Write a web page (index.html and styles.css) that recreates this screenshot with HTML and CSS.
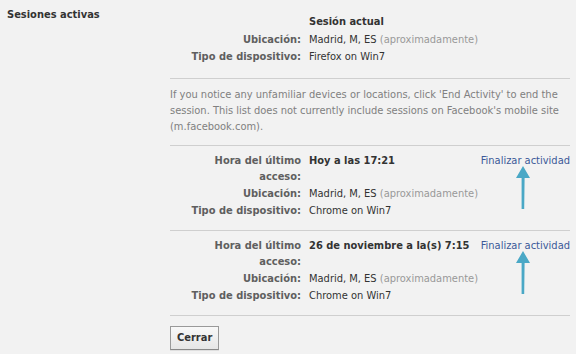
FILE: index.html
```html
<!DOCTYPE html>
<html lang="es">
<head>
<meta charset="utf-8">
<title>Sesiones activas</title>
<link rel="stylesheet" href="styles.css">
</head>
<body>
<div class="page">
  <div class="side">Sesiones activas</div>
  <div class="main">
    <div class="block current">
      <div class="grid">
        <div class="label"></div>
        <div class="value strong">Sesión actual</div>
        <div class="label">Ubicación:</div>
        <div class="value">Madrid, M, ES <span class="muted">(aproximadamente)</span></div>
        <div class="label">Tipo de dispositivo:</div>
        <div class="value">Firefox on Win7</div>
      </div>
    </div>
    <div class="block note">
      If you notice any unfamiliar devices or locations, click 'End Activity' to end the session. This list does not currently include sessions on Facebook's mobile site (m.facebook.com).
    </div>
    <div class="block session">
      <div class="grid three">
        <div class="label">Hora del último acceso:</div>
        <div class="value strong">Hoy a las 17:21</div>
        <div class="action"><a href="#" class="link">Finalizar actividad</a><svg class="arrow" width="20" height="46" viewBox="0 0 20 46"><path d="M10 0 L17 12 L11.6 12 L11.2 43 L8.6 43 L8.6 12 L3 12 Z" fill="#4aa8c6"/></svg></div>
        <div class="label">Ubicación:</div>
        <div class="value span2">Madrid, M, ES <span class="muted">(aproximadamente)</span></div>
        <div class="label">Tipo de dispositivo:</div>
        <div class="value span2">Chrome on Win7</div>
      </div>
    </div>
    <div class="block session">
      <div class="grid three">
        <div class="label">Hora del último acceso:</div>
        <div class="value strong">26 de noviembre a la(s) 7:15</div>
        <div class="action"><a href="#" class="link">Finalizar actividad</a><svg class="arrow" width="20" height="46" viewBox="0 0 20 46"><path d="M10 0 L17 12 L11.6 12 L11.2 43 L8.6 43 L8.6 12 L3 12 Z" fill="#4aa8c6"/></svg></div>
        <div class="label">Ubicación:</div>
        <div class="value span2">Madrid, M, ES <span class="muted">(aproximadamente)</span></div>
        <div class="label">Tipo de dispositivo:</div>
        <div class="value span2">Chrome on Win7</div>
      </div>
    </div>
    <div class="buttons"><button class="btn">Cerrar</button></div>
  </div>
</div>
</body>
</html>
```
FILE: styles.css
```css
html, body {
  margin: 0;
  padding: 0;
  background: #f2f2f2;
}
body {
  font-family: "DejaVu Sans Condensed", "DejaVu Sans", sans-serif;
  font-size: 11px;
  line-height: 16px;
  color: #333;
  width: 576px;
  height: 354px;
  overflow: hidden;
}
.page {
  display: flex;
  align-items: flex-start;
}
.side {
  width: 163px;
  padding: 7px 0 0 7px;
  font-weight: bold;
  color: #333;
}
.main {
  width: 400px;
  padding-top: 14px;
}
.block {
  border-bottom: 1px solid #cfcfcf;
}
.current {
  padding-bottom: 13px;
}
.note {
  padding: 8px 0 10px 0;
  color: #808080;
}
.session {
  padding: 7px 0 11px 0;
}
.grid {
  display: grid;
  grid-template-columns: 131px 1fr;
  column-gap: 8px;
  row-gap: 1px;
}
.current .grid .value.strong {
  margin-bottom: 1px;
}
.grid.three {
  grid-template-columns: 131px 1fr auto;
}
.label {
  text-align: right;
  font-weight: bold;
  color: #5f5f5f;
  padding-left: 4px;
}
.value {
  color: #333;
}
.strong {
  font-weight: bold;
}
.span2 {
  grid-column: span 2;
}
.muted {
  color: #999;
}
.action {
  position: relative;
  text-align: right;
}
.link {
  color: #3b5998;
  text-decoration: none;
}
.arrow {
  position: absolute;
  left: 32px;
  top: 13px;
}
.buttons {
  padding-top: 10px;
}
.btn {
  font-family: inherit;
  font-size: 11px;
  font-weight: bold;
  color: #333;
  background: linear-gradient(#f8f8f8, #e6e6e6);
  border: 1px solid #999;
  border-bottom-color: #888;
  padding: 3px 6px;
  line-height: 16px;
  box-shadow: 0 1px 0 rgba(0,0,0,0.08);
}
```
